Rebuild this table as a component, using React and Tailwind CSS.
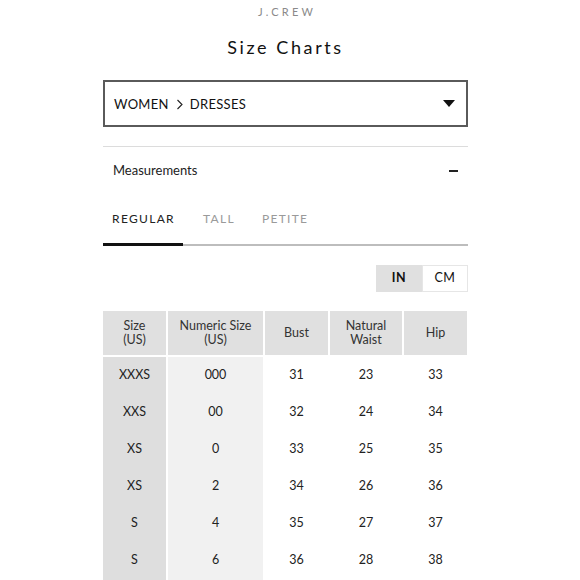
import React from "react";

const rows = [
  ["XXXS", "000", "31", "23", "33"],
  ["XXS", "00", "32", "24", "34"],
  ["XS", "0", "33", "25", "35"],
  ["XS", "2", "34", "26", "36"],
  ["S", "4", "35", "27", "37"],
  ["S", "6", "36", "28", "38"],
];

export default function App() {
  return (
    <div className="w-[580px] h-[580px] overflow-hidden bg-white text-[#222]" style={{ fontFamily: "Lato, 'Noto Sans', sans-serif" }}>
      <div className="h-[24px] flex items-center justify-center pr-[6px] text-[11px] tracking-[3.2px] text-[#8a8a8a]">J.CREW</div>
      <div className="h-[46px] flex items-center justify-center pr-[9px] text-[18px] tracking-[2.6px] text-[#111]">Size Charts</div>
      <div className="ml-[103px] w-[365px]">
        <div className="mt-[10px] h-[47px] border-2 border-[#5a5a5a] flex items-center pl-[9px] pr-[11px] pt-[2px]">
          <span className="text-[13px] tracking-[0.3px] text-[#111]">WOMEN</span>
          <svg width="8" height="11" viewBox="0 0 8 11" className="ml-[7px] mr-[6px]">
            <path d="M1.5 1 L6 5.5 L1.5 10" fill="none" stroke="#222" strokeWidth="1.1" />
          </svg>
          <span className="text-[13px] tracking-[0.3px] text-[#111]">DRESSES</span>
          <svg width="12" height="7" viewBox="0 0 12 7" className="ml-auto mb-[2px]">
            <path d="M0 0 H12 L6 7 Z" fill="#111" />
          </svg>
        </div>
        <div className="mt-[19px] h-px bg-[#dcdcdc]" />
        <div className="h-[48px] flex items-center pl-[10px] pr-[10px]">
          <span className="text-[13px] text-[#222]">Measurements</span>
          <span className="ml-auto w-[9px] h-[1.5px] bg-[#222]" />
        </div>
        <div className="h-[48px] flex items-center text-[12px] tracking-[1.3px]">
          <span className="w-[80px] text-center text-[#222] pl-[1px]">REGULAR</span>
          <span className="ml-[20px] text-[#9a9a9a]">TALL</span>
          <span className="ml-[27px] text-[#9a9a9a]">PETITE</span>
        </div>
        <div className="flex items-end h-[3px]">
          <div className="w-[80px] h-[3px] bg-[#111]" />
          <div className="flex-1 h-[2px] bg-[#bdbdbd]" />
        </div>
        <div className="mt-[19px] flex justify-end">
          <div className="flex h-[27px] text-[12.5px] tracking-[0.5px]">
            <div className="w-[46px] flex items-center justify-center bg-[#e0e0e0] font-bold text-[#111]">IN</div>
            <div className="w-[46px] flex items-center justify-center bg-white border border-[#e6e6e6] text-[#111]">CM</div>
          </div>
        </div>
        <div className="mt-[19px] grid grid-cols-[63px_95px_63px_72px_63px] gap-x-[2px] text-[12.5px] leading-[14px] text-[#333]">
          <div className="h-[44px] bg-[#e0e0e0] flex items-center justify-center text-center">Size<br />(US)</div>
          <div className="h-[44px] bg-[#e0e0e0] flex items-center justify-center text-center">Numeric Size<br />(US)</div>
          <div className="h-[44px] bg-[#e0e0e0] flex items-center justify-center text-center">Bust</div>
          <div className="h-[44px] bg-[#e0e0e0] flex items-center justify-center text-center">Natural<br />Waist</div>
          <div className="h-[44px] bg-[#e0e0e0] flex items-center justify-center text-center">Hip</div>
        </div>
        <div className="mt-[2px] grid grid-cols-[63px_95px_63px_72px_63px] gap-x-[2px] text-[12.5px] text-[#222]">
          {rows.map((r, i) => (
            <React.Fragment key={i}>
              <div className="h-[37px] bg-[#dedede] flex items-center justify-center">{r[0]}</div>
              <div className="h-[37px] bg-[#f1f1f1] flex items-center justify-center">{r[1]}</div>
              <div className="h-[37px] flex items-center justify-center">{r[2]}</div>
              <div className="h-[37px] flex items-center justify-center">{r[3]}</div>
              <div className="h-[37px] flex items-center justify-center">{r[4]}</div>
            </React.Fragment>
          ))}
          <div className="h-[37px] bg-[#dedede]" />
          <div className="h-[37px] bg-[#f1f1f1]" />
          <div className="h-[37px]" />
          <div className="h-[37px]" />
          <div className="h-[37px]" />
        </div>
      </div>
    </div>
  );
}
